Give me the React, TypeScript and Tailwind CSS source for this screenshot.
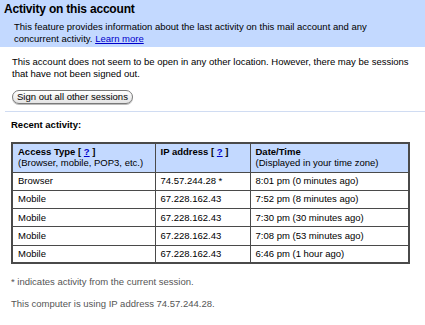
import React from "react";

const rows = [
  { type: "Browser", ip: "74.57.244.28 *", time: "8:01 pm (0 minutes ago)" },
  { type: "Mobile", ip: "67.228.162.43", time: "7:52 pm (8 minutes ago)" },
  { type: "Mobile", ip: "67.228.162.43", time: "7:30 pm (30 minutes ago)" },
  { type: "Mobile", ip: "67.228.162.43", time: "7:08 pm (53 minutes ago)" },
  { type: "Mobile", ip: "67.228.162.43", time: "6:46 pm (1 hour ago)" },
];

const Help = () => (
  <span className="font-bold">
    [ <span className="text-[#0000cc] underline">?</span> ]
  </span>
);

export default function App() {
  return (
    <div
      className="w-[425px] h-[325px] bg-white text-black overflow-hidden"
      style={{ fontFamily: '"Liberation Sans", Arial, sans-serif' }}
    >
      {/* header band */}
      <div className="bg-[#c3d9ff] h-[47px] pt-[2px]">
        <h1 className="pl-[4px] text-[12px] leading-[14px] font-bold tracking-[-0.2px]">Activity on this account</h1>
        <p className="pl-[14px] pt-[5px] text-[9.5px] leading-[12px]">
          This feature provides information about the last activity on this mail account and any
          <br />
          concurrent activity. <span className="text-[#0000cc] underline">Learn more</span>
        </p>
      </div>

      <div className="pl-[12px] pt-[9px] text-[9.5px] leading-[12px]">
        <p>
          This account does not seem to be open in any other location. However, there may be sessions
          <br />
          that have not been signed out.
        </p>
        <button className="mt-[10px] h-[14px] px-[4px] rounded-full border border-[#7a7a7a] bg-gradient-to-b from-white to-[#e4e4e4] text-[9.5px] leading-[12px] shadow-[0_1px_0_#bbbbbb]">
          Sign out all other sessions
        </button>
      </div>

      <div className="ml-[5px] mt-[7px] h-px bg-[#d0dcf2]" />

      <div className="pl-[11px] pt-[7px] text-[9.5px] leading-[12px]">
        <p className="font-bold">Recent activity:</p>
        <table className="mt-[11px] w-[397px] table-fixed border-collapse border-2 border-[#4a4a4a]">
          <colgroup>
            <col className="w-[143px]" />
            <col className="w-[95px]" />
            <col className="w-[159px]" />
          </colgroup>
          <thead>
            <tr className="bg-[#c3d9ff] h-[29px] align-top">
              <th className="border border-[#4a4a4a] text-left font-normal px-[5px] pt-[3px] leading-[10.5px]">
                <span className="font-bold">Access Type </span>
                <Help />
                <br />
                (Browser, mobile, POP3, etc.)
              </th>
              <th className="border border-[#4a4a4a] text-left font-normal px-[5px] pt-[3px] leading-[10.5px]">
                <span className="font-bold">IP address </span>
                <Help />
              </th>
              <th className="border border-[#4a4a4a] text-left font-normal px-[5px] pt-[3px] leading-[10.5px]">
                <span className="font-bold">Date/Time</span>
                <br />
                (Displayed in your time zone)
              </th>
            </tr>
          </thead>
          <tbody>
            {rows.map((r, i) => (
              <tr key={i} className="h-[18.3px]">
                <td className="border border-[#4a4a4a] px-[5px]">{r.type}</td>
                <td className="border border-[#4a4a4a] px-[5px]">{r.ip}</td>
                <td className="border border-[#4a4a4a] px-[5px]">{r.time}</td>
              </tr>
            ))}
          </tbody>
        </table>
        <p className="mt-[12px] text-[#555555]">* indicates activity from the current session.</p>
        <p className="mt-[10px] text-[#555555]">This computer is using IP address 74.57.244.28.</p>
      </div>
    </div>
  );
}
